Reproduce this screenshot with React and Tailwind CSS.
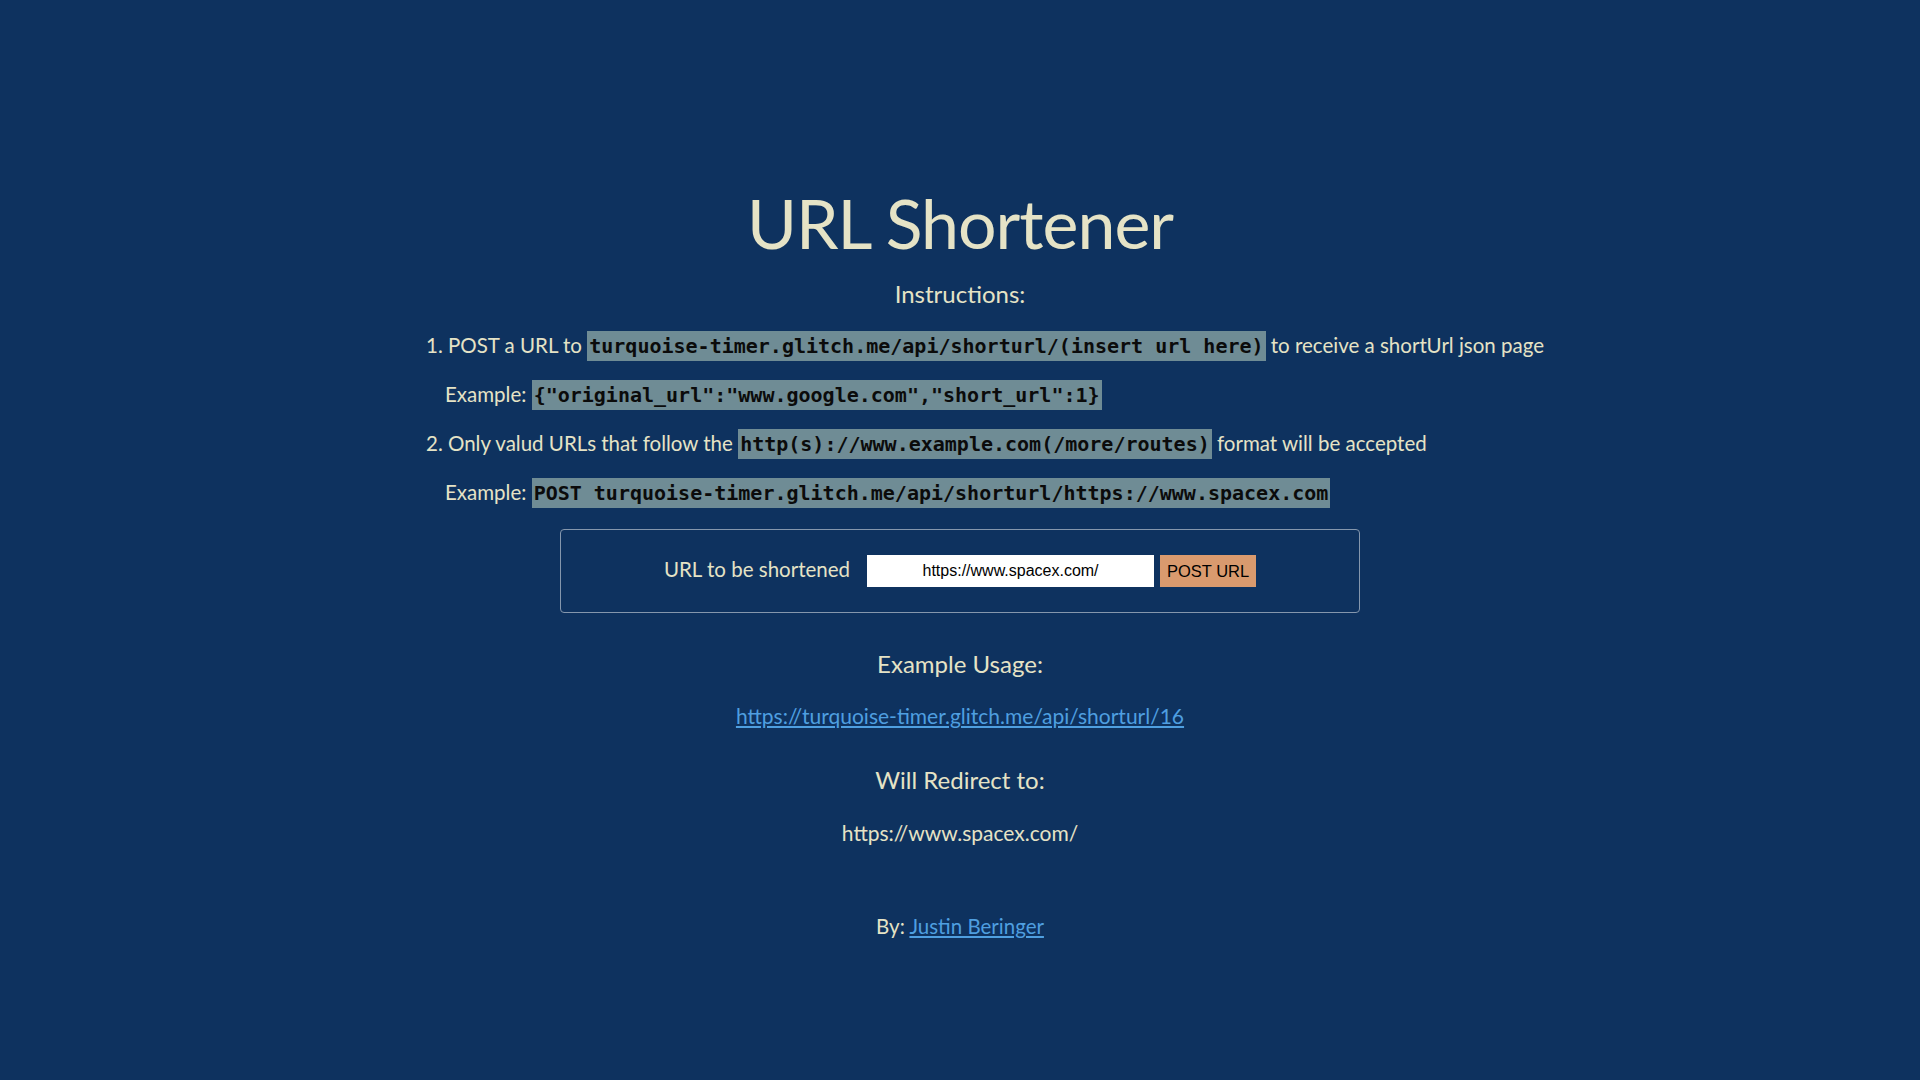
import React from 'react';

const code = 'bg-[#6f8c95] text-[#0b0b0b] font-bold px-[2px] py-[3px] leading-[24px] text-[20px] [font-family:"DejaVu_Sans_Mono",monospace]';

function App() {
  return (
    <div className="min-h-screen w-full bg-[#0e325f] text-[#e5e3c6] [font-family:Lato,'Open_Sans',sans-serif] pt-[183px]">
      <h1 className="text-center text-[68px] leading-[80px] font-normal tracking-[-1px]">URL Shortener</h1>
      <h3 className="mt-[16px] text-center text-[24px] leading-[30px]">Instructions:</h3>

      <div className="mt-[12px] mx-auto w-[1240px] pl-[86px] text-[20.5px] whitespace-pre">
        <div className="h-[49px] flex items-center">
          <span>1. POST a URL to </span>
          <span className={code}>turquoise-timer.glitch.me/api/shorturl/(insert url here)</span>
          <span> to receive a shortUrl json page</span>
        </div>
        <div className="h-[49px] flex items-center pl-[19px]">
          <span>Example: </span>
          <span className={code}>{'{"original_url":"www.google.com","short_url":1}'}</span>
        </div>
        <div className="h-[49px] flex items-center">
          <span>2. Only valud URLs that follow the </span>
          <span className={code}>http(s)://www.example.com(/more/routes)</span>
          <span> format will be accepted</span>
        </div>
        <div className="h-[49px] flex items-center pl-[19px]">
          <span>Example: </span>
          <span className={code}>POST turquoise-timer.glitch.me/api/shorturl/https://www.spacex.com</span>
        </div>
      </div>

      <form
        className="mt-[12px] mx-auto w-[800px] h-[84px] border border-[#8597ad] rounded-[4px] flex items-center justify-center"
        onSubmit={(e) => e.preventDefault()}
      >
        <label className="text-[20.5px] mr-[17px] -mt-[3px]">URL to be shortened</label>
        <input
          type="text"
          defaultValue="https://www.spacex.com/"
          className="w-[287px] h-[32px] bg-white text-black text-center text-[16px] [font-family:'Liberation_Sans',Arial,sans-serif] outline-none"
        />
        <button
          type="submit"
          className="ml-[6px] w-[96px] h-[32px] bg-[#d99a6e] text-black text-[16.5px] [font-family:'Liberation_Sans',Arial,sans-serif]"
        >
          POST URL
        </button>
      </form>

      <h3 className="mt-[36px] text-center text-[24px] leading-[30px]">Example Usage:</h3>
      <p className="mt-[23px] text-center text-[21px] leading-[28px]">
        <a href="#" className="text-[#4f9fe0] underline">https://turquoise-timer.glitch.me/api/shorturl/16</a>
      </p>
      <h3 className="mt-[35px] text-center text-[24px] leading-[30px]">Will Redirect to:</h3>
      <p className="mt-[24px] text-center text-[21px] leading-[28px]">https://www.spacex.com/</p>

      <p className="mt-[65px] text-center text-[20.5px] leading-[28px]">
        By: <a href="#" className="text-[#4f9fe0] underline">Justin Beringer</a>
      </p>
    </div>
  );
}

export default App;
